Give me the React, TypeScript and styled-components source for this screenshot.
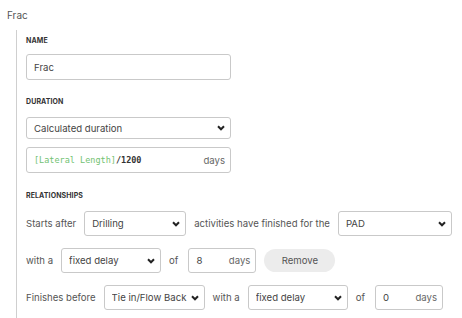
import React, { FC } from "react";
import styled, { createGlobalStyle } from "styled-components";

const GlobalStyle = createGlobalStyle`
  html, body {
    margin: 0;
    padding: 0;
    background: #ffffff;
  }
  body {
    font-family: Inter, "Noto Sans", "Liberation Sans", sans-serif;
    color: #444;
  }
`;

const Page = styled.div`
  width: 462px;
  height: 318px;
  overflow: hidden;
`;

const Title = styled.div`
  padding: 8px 7px;
  font-size: 10px;
  line-height: 14px;
  color: #555;
`;

const Panel = styled.div`
  margin-left: 16px;
  border-left: 1px solid #cfcfcf;
  padding: 6px 0 10px 9px;
  display: flex;
  flex-direction: column;
`;

const SectionLabel = styled.div<{ $top: number }>`
  margin-top: ${(p) => p.$top}px;
  font-size: 7px;
  line-height: 10px;
  font-weight: 700;
  color: #333;
  letter-spacing: 0.1px;
`;

const Field = styled.div<{ $width: number; $height: number; $top?: number }>`
  box-sizing: border-box;
  width: ${(p) => p.$width}px;
  height: ${(p) => p.$height}px;
  margin-top: ${(p) => p.$top ?? 0}px;
  flex: none;
  border: 1px solid #c9c9c9;
  border-radius: 3px;
  background: #fff;
  display: flex;
  align-items: center;
  padding: 0 5px 0 7px;
  font-size: 9.6px;
  color: #444;
  white-space: nowrap;
`;

const FieldText = styled.span`
  flex: 1;
  overflow: hidden;
`;

const Unit = styled.span`
  color: #666;
  font-size: 9.6px;
`;

const Formula = styled.span`
  flex: 1;
  font-family: "DejaVu Sans Mono", "Liberation Mono", monospace;
  font-size: 8.5px;
  color: #333;
  font-weight: 700;
`;

const Ref = styled.span`
  color: #72c272;
  font-weight: 400;
`;

const Row = styled.div<{ $top: number }>`
  display: flex;
  align-items: center;
  gap: 8px;
  margin-top: ${(p) => p.$top}px;
  height: 25px;
`;

const RowText = styled.span<{ $after?: number }>`
  font-size: 9.6px;
  color: #555;
  white-space: nowrap;
  margin-right: ${(p) => p.$after ?? 0}px;
`;

const RemoveButton = styled.button`
  box-sizing: border-box;
  width: 71px;
  height: 23px;
  border: none;
  border-radius: 12px;
  background: #ececec;
  color: #555;
  font-family: inherit;
  font-size: 9.6px;
  padding: 0;
`;

const Chevron: FC = () => (
  <svg width="8" height="6" viewBox="0 0 8 6" style={{ flex: "none" }}>
    <path d="M1 1.3 L4 4.3 L7 1.3" fill="none" stroke="#222" strokeWidth="2" />
  </svg>
);

interface SelectProps {
  value: string;
  width: number;
  height?: number;
  top?: number;
}

const Select: FC<SelectProps> = ({ value, width, height = 25, top }) => (
  <Field $width={width} $height={height} $top={top}>
    <FieldText>{value}</FieldText>
    <Chevron />
  </Field>
);

const DaysInput: FC<{ value: string }> = ({ value }) => (
  <Field $width={68} $height={25}>
    <FieldText>{value}</FieldText>
    <Unit>days</Unit>
  </Field>
);

export default function App() {
  return (
    <Page>
      <GlobalStyle />
      <Title>Frac</Title>
      <Panel>
        <SectionLabel $top={0}>NAME</SectionLabel>
        <Field $width={205} $height={26} $top={8}>
          <FieldText>Frac</FieldText>
        </Field>

        <SectionLabel $top={17}>DURATION</SectionLabel>
        <Select value="Calculated duration" width={205} height={22} top={10} />
        <Field $width={205} $height={26} $top={8}>
          <Formula>
            <Ref>[Lateral Length]</Ref>/1200
          </Formula>
          <Unit>days</Unit>
        </Field>

        <SectionLabel $top={18}>RELATIONSHIPS</SectionLabel>
        <Row $top={10}>
          <RowText>Starts after</RowText>
          <Select value="Drilling" width={102} />
          <RowText>activities have finished for the</RowText>
          <Select value="PAD" width={114} />
        </Row>
        <Row $top={12}>
          <RowText>with a</RowText>
          <Select value="fixed delay" width={100} />
          <RowText $after={2}>of</RowText>
          <DaysInput value="8" />
          <RemoveButton>Remove</RemoveButton>
        </Row>
        <Row $top={12}>
          <RowText>Finishes before</RowText>
          <Select value="Tie in/Flow Back" width={101} />
          <RowText>with a</RowText>
          <Select value="fixed delay" width={100} />
          <RowText $after={2}>of</RowText>
          <DaysInput value="0" />
        </Row>
      </Panel>
    </Page>
  );
}
